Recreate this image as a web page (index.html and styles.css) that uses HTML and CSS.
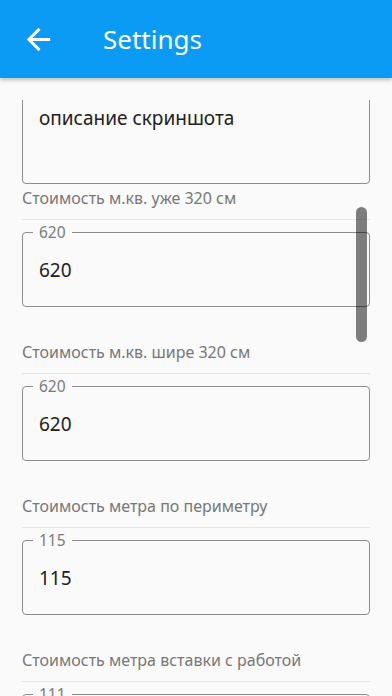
FILE: index.html
```html
<!DOCTYPE html>
<html lang="ru">
<head>
    <meta charset="UTF-8">
    <meta name="viewport" content="width=device-width, initial-scale=1.0">
    <title>Settings</title>
    <link rel="stylesheet" href="styles.css">
</head>
<body>

    <header class="app-bar">
        <button class="back-button" aria-label="Back">
            <svg viewBox="0 0 24 24" width="35" height="35">
                <path d="M20 11H7.83l5.59-5.59L12 4l-8 8 8 8 1.41-1.41L7.83 13H20v-2z" fill="#ffffff"/>
            </svg>
        </button>
        <h1 class="title">Settings</h1>
    </header>

    <main class="scroller">
        <div class="list">
            <fieldset class="field field-multi">
                <div class="value">описание скриншота</div>
            </fieldset>

            <div class="label">Стоимость м.кв. уже 320 см</div>
            <hr class="divider">
            <fieldset class="field">
                <legend>620</legend>
                <div class="value">620</div>
            </fieldset>

            <div class="label spaced">Стоимость м.кв. шире 320 см</div>
            <hr class="divider">
            <fieldset class="field">
                <legend>620</legend>
                <div class="value">620</div>
            </fieldset>

            <div class="label spaced">Стоимость метра по периметру</div>
            <hr class="divider">
            <fieldset class="field">
                <legend>115</legend>
                <div class="value">115</div>
            </fieldset>

            <div class="label spaced">Стоимость метра вставки с работой</div>
            <hr class="divider">
            <fieldset class="field">
                <legend>111</legend>
                <div class="value">111</div>
            </fieldset>
        </div>

        <div class="scroll-thumb"></div>
    </main>

</body>
</html>
```

FILE: styles.css
```css
* {
    box-sizing: border-box;
    font-family: "Noto Sans", "Open Sans", sans-serif;
}
body {
    margin: 0;
    height: 696px;
    overflow: hidden;
    background-color: #fafafa;
}
.app-bar {
    position: relative;
    z-index: 2;
    height: 78px;
    display: flex;
    align-items: center;
    background-color: #0b9bf5;
    box-shadow: 0 2px 4px rgba(0, 0, 0, 0.25);
}
.back-button {
    width: 35px;
    height: 35px;
    margin-left: 21px;
    padding: 0;
    border: none;
    background: none;
    display: flex;
}
.title {
    margin: 0 0 0 47px;
    font-size: 26px;
    font-weight: normal;
    color: #ffffff;
}
.scroller {
    position: relative;
    margin-top: 22px;
    height: 596px;
    overflow: hidden;
}
.list {
    padding: 0 22px;
}
.field {
    margin: 4px 0 0;
    padding: 16px 16px 22px;
    border: 1px solid #8c8c8c;
    border-radius: 4px;
    min-width: 0;
}
.field legend {
    margin-left: -6px;
    padding: 0 6px;
    font-size: 15.5px;
    line-height: 16px;
    color: #7a7a7a;
}
.field-multi {
    margin-top: -13px;
    padding-bottom: 23px;
}
.field-multi .value {
    height: 56px;
}
.value {
    font-size: 19px;
    line-height: 28px;
    color: #212121;
}
.label {
    margin-top: 4px;
    font-size: 16px;
    line-height: 20px;
    color: #777777;
}
.label.spaced {
    margin-top: 35px;
}
.divider {
    margin: 11px 0 0;
    border: none;
    border-top: 1px solid #e6e6e6;
}
.scroll-thumb {
    position: absolute;
    left: 356px;
    top: 107px;
    width: 11px;
    height: 135px;
    border-radius: 6px;
    background-color: rgba(0, 0, 0, 0.5);
}
```
